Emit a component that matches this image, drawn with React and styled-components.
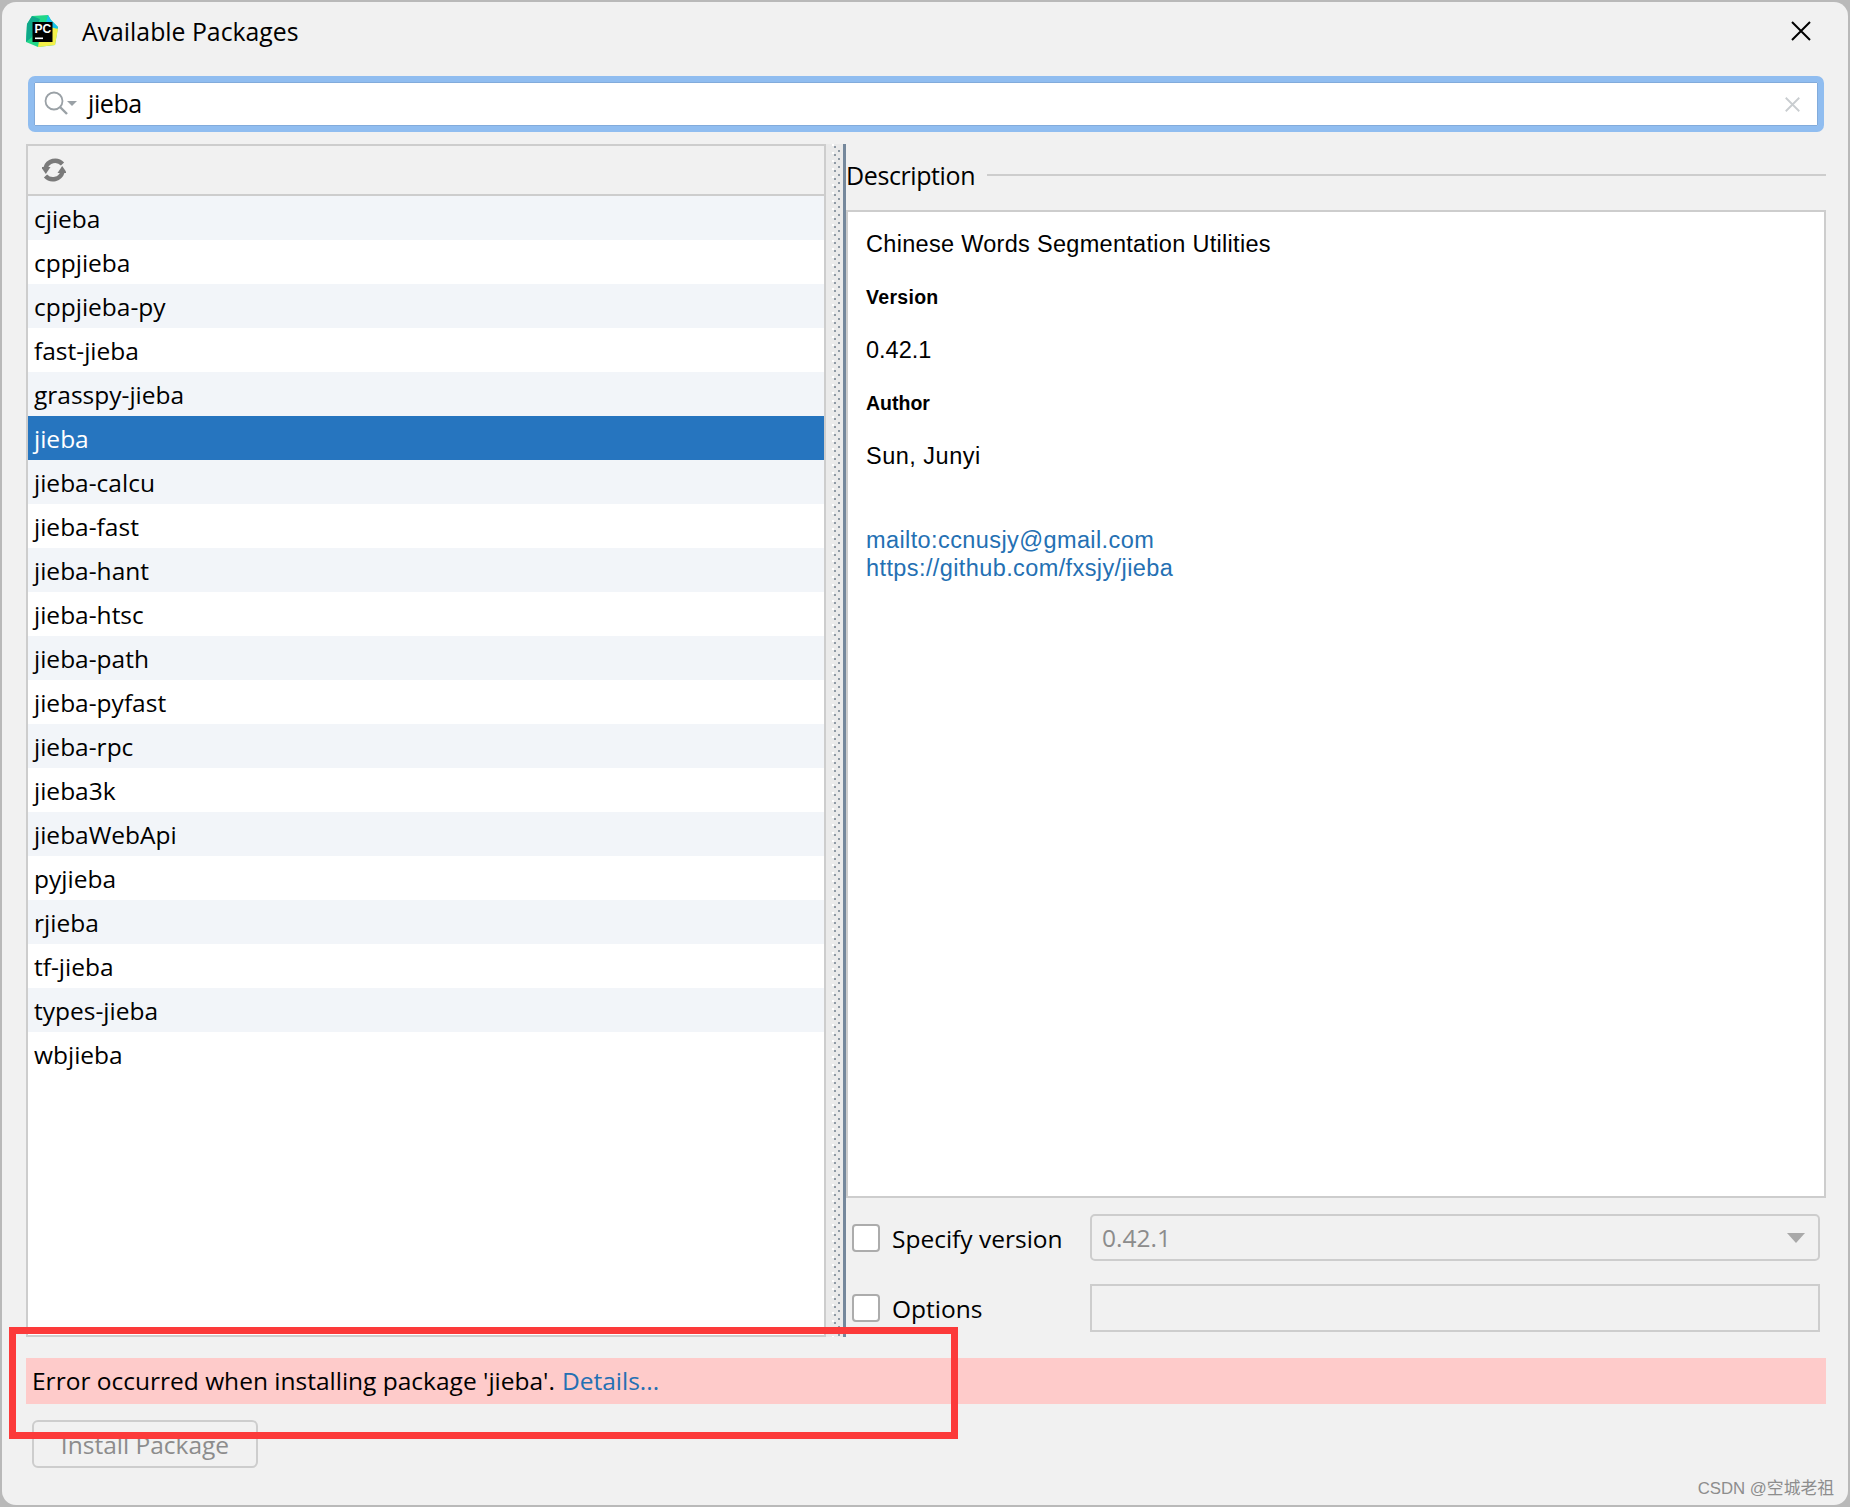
import React from 'react'
import styled, { createGlobalStyle } from 'styled-components'

const UI_FONT = '"Open Sans", "Noto Sans", sans-serif'

const packages = [
  'cjieba', 'cppjieba', 'cppjieba-py', 'fast-jieba', 'grasspy-jieba', 'jieba', 'jieba-calcu',
  'jieba-fast', 'jieba-hant', 'jieba-htsc', 'jieba-path', 'jieba-pyfast', 'jieba-rpc', 'jieba3k',
  'jiebaWebApi', 'pyjieba', 'rjieba', 'tf-jieba', 'types-jieba', 'wbjieba'
]

const GlobalStyle = createGlobalStyle`
  html, body {
    margin: 0;
    padding: 0;
    background: #b9b9b9;
  }
  * {
    box-sizing: border-box;
  }
`

const Page = styled.div`
  position: relative;
  width: 1850px;
  height: 1507px;
  padding: 2px;
  overflow: hidden;
`

const Dialog = styled.div`
  display: flex;
  flex-direction: column;
  width: 1846px;
  height: 1503px;
  padding: 0 22px 0 24px;
  border-radius: 14px;
  background: #f1f1f1;
  font-family: ${UI_FONT};
  font-size: 24.5px;
  color: #000;
`

const TitleBar = styled.div`
  display: flex;
  align-items: center;
  gap: 24px;
  height: 58px;
  margin-bottom: 16px;
  padding-right: 15px;
`

const Title = styled.div`
  flex: 1;
  font-size: 24.8px;
`

const SearchBox = styled.div`
  display: flex;
  align-items: center;
  height: 56px;
  margin: 0 2px 12px;
  padding: 0 18px 0 10px;
  border: 6px solid #90bdf0;
  border-radius: 7px;
  background: #fff;
  box-shadow: inset 0 0 0 1px #82abdb;
  font-size: 25px;
`

const SearchText = styled.span`
  flex: 1;
  margin: -2px 0 0 10px;
  letter-spacing: -0.4px;
`

const Main = styled.div`
  display: flex;
  height: 1193px;
`

const ListPanel = styled.div`
  display: flex;
  flex-direction: column;
  width: 800px;
  border: 2px solid #cdcdcd;
  background: #fff;
`

const ListToolbar = styled.div`
  display: flex;
  align-items: center;
  flex: none;
  height: 50px;
  padding-left: 14px;
  border-bottom: 2px solid #cdcdcd;
  background: #f1f1f1;
`

const Row = styled.div`
  flex: none;
  height: 44px;
  padding-left: 6px;
  line-height: 46px;
  background: ${p => (p.$selected ? '#2675bf' : p.$odd ? '#f2f5f9' : '#fff')};
  color: ${p => (p.$selected ? '#fff' : '#000')};
`

const Splitter = styled.div`
  flex: none;
  width: 20px;
  border-right: 3px solid #75889c;
  background-color: #eaeaea;
  background-image:
    linear-gradient(to bottom, #fff 0 2px, transparent 2px),
    linear-gradient(to bottom, #8f9aa5 0 2px, transparent 2px),
    linear-gradient(to bottom, #8f9aa5 0 2px, transparent 2px);
  background-size: 2px 8px;
  background-repeat: repeat-y;
  background-position: 6px 0, 8px 2px, 12px 6px;
`

const RightColumn = styled.div`
  display: flex;
  flex: 1;
  flex-direction: column;
  min-width: 0;
`

const SectionHeader = styled.div`
  display: flex;
  align-items: center;
  flex: none;
  gap: 12px;
  height: 62px;
  margin-bottom: 4px;
  font-size: 25px;
  letter-spacing: -0.4px;
`

const SectionRule = styled.div`
  flex: 1;
  height: 2px;
  background: #cdcdcd;
`

const DescriptionPanel = styled.div`
  flex: none;
  height: 988px;
  padding: 6px 18px;
  border: 2px solid #cdcdcd;
  background: #fff;
  font-family: "Liberation Sans", Arial, sans-serif;
  font-size: 23.5px;
`

const Para = styled.div`
  height: 53px;
  line-height: 53px;
  white-space: nowrap;
  letter-spacing: ${p => p.$spacing || 0}px;
`

const Heading = styled(Para)`
  font-size: 19.5px;
  font-weight: 700;
`

const Links = styled.div`
  margin-top: 43px;
`

const DocLink = styled.div`
  height: 28px;
  line-height: 28px;
  letter-spacing: 0.4px;
  color: #2470b3;
`

const OptionRow = styled.div`
  display: grid;
  grid-template-columns: 28px 186px 1fr;
  column-gap: 12px;
  align-items: center;
  flex: none;
  height: ${p => p.$height}px;
  margin-top: ${p => p.$top}px;
  padding: 0 6px;
`

const CheckBox = styled.div`
  width: 28px;
  height: 28px;
  border: 2px solid #acacac;
  border-radius: 4px;
  background: #fff;
`

const OptionLabel = styled.span`
  position: relative;
  top: 1px;
`

const VersionSelect = styled.div`
  display: flex;
  align-items: center;
  justify-content: space-between;
  height: 47px;
  padding: 0 13px 0 10px;
  border: 2px solid #cdcdcd;
  border-radius: 5px;
  color: #8c8c8c;
`

const SelectArrow = styled.div`
  width: 0;
  height: 0;
  border-left: 9px solid transparent;
  border-right: 9px solid transparent;
  border-top: 10px solid #a9a9a9;
`

const OptionsField = styled.div`
  height: 48px;
  border: 2px solid #cdcdcd;
`

const ErrorBar = styled.div`
  flex: none;
  height: 46px;
  margin-top: 21px;
  padding-left: 6px;
  line-height: 46px;
  background: #fecbca;
`

const DetailsLink = styled.span`
  margin-left: 7px;
  color: #2470b3;
`

const InstallButton = styled.div`
  width: 226px;
  height: 48px;
  margin: 16px 0 0 6px;
  border: 2px solid #cdcdcd;
  border-radius: 6px;
  line-height: 46px;
  text-align: center;
  color: #8c8c8c;
`

// red box the author of the screenshot drew over the dialog
const Annotation = styled.div`
  position: absolute;
  left: 9px;
  top: 1327px;
  width: 949px;
  height: 112px;
  border: 7px solid #fc3a3a;
`

const Watermark = styled.div`
  position: absolute;
  right: 16px;
  bottom: 8px;
  font-family: "Liberation Sans", "Noto Sans CJK SC", sans-serif;
  font-size: 16.8px;
  color: #8d8d8d;
`

const PyCharmLogo = () => (
  <svg width="32" height="32" viewBox="0 0 32 32">
    <polygon points="6,1 22,0 25,5 32,12 29,30 12,32 0,27 1,9" fill="#21d789" />
    <polygon points="22,0 25,5 32,12 28,18 20,8" fill="#17c2ec" />
    <polygon points="12,32 29,30 32,14 24,12 14,20" fill="#f4f049" />
    <polygon points="1,9 6,1 14,4 6,22 0,27" fill="#0fa88a" />
    <rect x="6.5" y="7" width="20" height="20" fill="#000" />
    <text x="8.5" y="18" fontFamily="Liberation Sans, sans-serif" fontSize="12" fontWeight="700" fill="#fff">PC</text>
    <rect x="9" y="22.5" width="8" height="1.6" fill="#fff" />
  </svg>
)

const SearchIcon = () => (
  <svg width="34" height="26" viewBox="0 0 34 26" fill="none">
    <circle cx="10" cy="10" r="8.5" stroke="#9aa1a6" strokeWidth="1.8" />
    <line x1="16" y1="16" x2="23" y2="23" stroke="#9aa1a6" strokeWidth="2.4" />
    <polygon points="23,10 33,10 28,15" fill="#9aa1a6" />
  </svg>
)

const RefreshIcon = () => (
  <svg width="24" height="24" viewBox="0 0 24 24" fill="none">
    <path d="M20.5 6 A10 10 0 0 0 3.5 10" stroke="#7a7a7a" strokeWidth="4.4" />
    <polygon points="-1,9 8.5,9 3.8,16" fill="#7a7a7a" />
    <path d="M3.5 18 A10 10 0 0 0 20.5 14" stroke="#7a7a7a" strokeWidth="4.4" />
    <polygon points="15.5,15 25,15 20.2,8" fill="#7a7a7a" />
  </svg>
)

const CloseIcon = ({ size, color, width }) => (
  <svg width={size} height={size} viewBox="0 0 20 20" fill="none">
    <path d="M1 1 L19 19 M19 1 L1 19" stroke={color} strokeWidth={width} />
  </svg>
)

const App = () => (
  <Page>
    <GlobalStyle />
    <Dialog>
      <TitleBar>
        <PyCharmLogo />
        <Title>Available Packages</Title>
        <CloseIcon size={20} color="#000" width={2} />
      </TitleBar>
      <SearchBox>
        <SearchIcon />
        <SearchText>jieba</SearchText>
        <CloseIcon size={15} color="#c9cdd0" width={2.4} />
      </SearchBox>
      <Main>
        <ListPanel>
          <ListToolbar>
            <RefreshIcon />
          </ListToolbar>
          {packages.map((name, i) => (
            <Row key={name} $odd={i % 2 === 0} $selected={name === 'jieba'}>{name}</Row>
          ))}
        </ListPanel>
        <Splitter />
        <RightColumn>
          <SectionHeader>
            Description
            <SectionRule />
          </SectionHeader>
          <DescriptionPanel>
            <Para $spacing={0.3}>Chinese Words Segmentation Utilities</Para>
            <Heading $spacing={0.3}>Version</Heading>
            <Para>0.42.1</Para>
            <Heading>Author</Heading>
            <Para $spacing={0.5}>Sun, Junyi</Para>
            <Links>
              <DocLink>mailto:ccnusjy@gmail.com</DocLink>
              <DocLink>https://github.com/fxsjy/jieba</DocLink>
            </Links>
          </DescriptionPanel>
          <OptionRow $height={47} $top={16}>
            <CheckBox />
            <OptionLabel>Specify version</OptionLabel>
            <VersionSelect>
              0.42.1
              <SelectArrow />
            </VersionSelect>
          </OptionRow>
          <OptionRow $height={48} $top={23}>
            <CheckBox />
            <span>Options</span>
            <OptionsField />
          </OptionRow>
        </RightColumn>
      </Main>
      <ErrorBar>
        Error occurred when installing package 'jieba'.
        <DetailsLink>Details...</DetailsLink>
      </ErrorBar>
      <InstallButton>Install Package</InstallButton>
    </Dialog>
    <Annotation />
    <Watermark>CSDN @空城老祖</Watermark>
  </Page>
)

export default App
